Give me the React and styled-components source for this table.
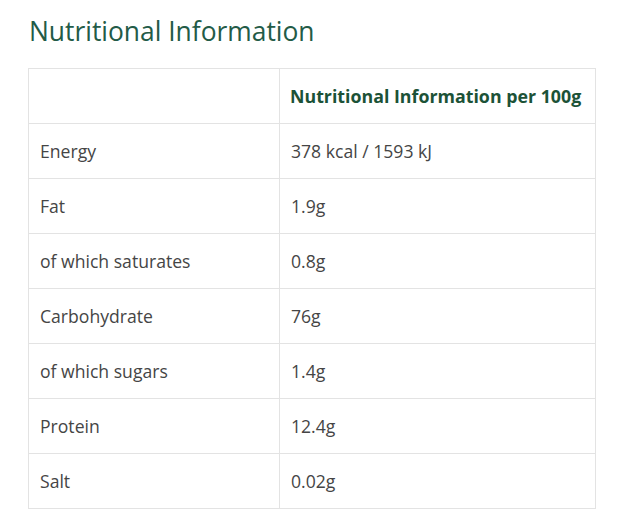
import React from "react";
import styled, { createGlobalStyle } from "styled-components";

const GlobalStyle = createGlobalStyle`
  body {
    margin: 0;
    background: #fff;
    font-family: "Open Sans", "Noto Sans", sans-serif;
  }
`;

const Page = styled.div`
  padding: 14px 35px 0 28px;
`;

const Title = styled.h2`
  margin: 0 0 20px 1px;
  font-weight: 400;
  font-size: 26.4px;
  line-height: 34px;
  color: #235b47;
`;

const Table = styled.table`
  width: 568px;
  border-collapse: collapse;
  table-layout: fixed;
`;

const Cell = styled.td`
  height: 54px;
  padding: 0 10px 0 11px;
  border: 1px solid #e3e3e3;
  font-size: 17.6px;
  color: #454545;
  vertical-align: middle;
  width: ${(p) => (p.$first ? "229px" : "auto")};
`;

const HeadCell = styled.th`
  height: 54px;
  padding: 0 10px;
  border: 1px solid #e3e3e3;
  font-size: 17.8px;
  font-weight: 700;
  text-align: left;
  color: #1c5237;
  width: ${(p) => (p.$first ? "230px" : "auto")};
`;

const rows = [
  ["Energy", "378 kcal / 1593 kJ"],
  ["Fat", "1.9g"],
  ["of which saturates", "0.8g"],
  ["Carbohydrate", "76g"],
  ["of which sugars", "1.4g"],
  ["Protein", "12.4g"],
  ["Salt", "0.02g"],
];

const App = () => (
  <>
    <GlobalStyle />
    <Page>
      <Title>Nutritional Information</Title>
      <Table>
        <thead>
          <tr>
            <HeadCell $first />
            <HeadCell>Nutritional Information per 100g</HeadCell>
          </tr>
        </thead>
        <tbody>
          {rows.map(([name, value]) => (
            <tr key={name}>
              <Cell $first>{name}</Cell>
              <Cell>{value}</Cell>
            </tr>
          ))}
        </tbody>
      </Table>
    </Page>
  </>
);

export default App;
